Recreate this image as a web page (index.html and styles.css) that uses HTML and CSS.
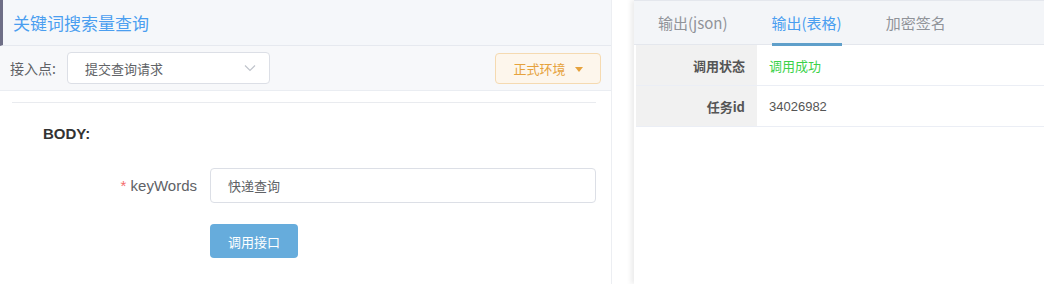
FILE: index.html
```html
<!DOCTYPE html>
<html lang="zh">
<head>
<meta charset="utf-8">
<link rel="stylesheet" href="styles.css">
</head>
<body>
<div class="page">
  <section class="left">
    <div class="head"><span class="title">关键词搜索量查询</span></div>
    <div class="toolbar">
      <div class="entry">
        <span class="entry-label">接入点:</span>
        <div class="select">
          <span>提交查询请求</span>
          <svg class="chev" width="12" height="8" viewBox="0 0 12 8"><path d="M1 1.5 L6 6.5 L11 1.5" fill="none" stroke="#c0c4cc" stroke-width="1.2"/></svg>
        </div>
      </div>
      <div class="env">正式环境<span class="tri"></span></div>
    </div>
    <div class="body">
      <div class="divider"></div>
      <div class="body-title">BODY:</div>
      <div class="form-row">
        <label class="form-label"><span class="star">*</span> keyWords</label>
        <div class="input">快递查询</div>
      </div>
      <div class="form-row btn-row">
        <div class="btn">调用接口</div>
      </div>
    </div>
  </section>
  <div class="gap"></div>
  <section class="right">
    <div class="tabs">
      <div class="tab">输出(json)</div>
      <div class="tab active">输出(表格)</div>
      <div class="tab">加密签名</div>
    </div>
    <div class="table">
      <div class="row"><div class="k">调用状态</div><div class="v ok">调用成功</div></div>
      <div class="row"><div class="k">任务id</div><div class="v">34026982</div></div>
    </div>
  </section>
</div>
</body>
</html>
```
FILE: styles.css
```css
* { box-sizing: border-box; }
html, body { margin: 0; padding: 0; }
body {
  width: 1044px; height: 284px; overflow: hidden; background: #fff;
  font-family: "Liberation Sans", "Noto Sans CJK SC", sans-serif;
}
.page { display: flex; height: 284px; }
.left { width: 612px; border-right: 1px solid #eceef2; display: flex; flex-direction: column; }
.head {
  height: 46px; background: #f5f7fa; border-left: 3px solid #6e6e86;
  border-bottom: 1px solid #e6e9ef; display: flex; align-items: center; padding-left: 10px;
}
.title { font-size: 17px; color: #4a9ef0; font-family: "Noto Sans CJK SC", sans-serif; }
.toolbar {
  height: 45px; background: #f7f8fa; border-bottom: 1px solid #eaedf2;
  display: flex; align-items: center; justify-content: space-between; padding: 0 10px 0 10px;
}
.entry { display: flex; align-items: center; }
.entry-label { font-size: 14px; color: #606266; font-family: "Noto Sans CJK SC", sans-serif; }
.select {
  margin-left: 11px; width: 203px; height: 32px; background: #fff; border: 1px solid #dcdfe6;
  border-radius: 4px; display: flex; align-items: center; justify-content: space-between;
  padding: 0 13px 0 17px; font-size: 13px; color: #606266; font-family: "Noto Sans CJK SC", sans-serif;
}
.env {
  width: 106px; height: 31px; background: #fdf6ec; border: 1px solid #f5dab1; border-radius: 4px;
  color: #e6a23c; font-size: 13px; display: flex; align-items: center; justify-content: center;
  font-family: "Noto Sans CJK SC", sans-serif;
}
.tri {
  width: 0; height: 0; border-left: 4px solid transparent; border-right: 4px solid transparent;
  border-top: 5px solid #e6a23c; margin-left: 9px; margin-top: 2px;
}
.body { padding: 0 15px 0 12px; }
.divider { margin-top: 11px; height: 1px; background: #e9ebef; }
.body-title { margin: 23px 0 0 31px; font-size: 15px; font-weight: bold; color: #333; line-height: 16px; }
.form-row { display: flex; align-items: center; }
.body-title + .form-row { margin-top: 26px; }
.form-label {
  width: 198px; text-align: right; padding-right: 13px; font-size: 15px; color: #606266;
}
.star { color: #f56c6c; }
.input {
  flex: 1; height: 35px; border: 1px solid #dcdfe6; border-radius: 4px; padding-left: 17px;
  display: flex; align-items: center; font-size: 13px; color: #606266; font-family: "Noto Sans CJK SC", sans-serif;
}
.btn-row { margin-top: 21px; padding-left: 198px; }
.btn {
  width: 88px; height: 34px; background: #66acdc; border-radius: 4px; color: #fff; font-size: 13px;
  display: flex; align-items: center; justify-content: center; font-family: "Noto Sans CJK SC", sans-serif;
}
.gap { width: 22px; }
.right {
  flex: 1; border-top: 1px solid #e4e7ed; box-shadow: -3px 0 5px rgba(0,0,0,0.08);
  display: flex; flex-direction: column;
}
.tabs {
  height: 44px; background: #f3f5f8; border-bottom: 1px solid #e4e7ed; display: flex; align-items: stretch;
  padding-left: 24px; gap: 44px;
}
.tab {
  font-size: 15px; color: #909399; display: flex; align-items: center;
  border-bottom: 3px solid transparent; margin-bottom: -2px; font-family: "Noto Sans CJK SC", sans-serif;
}
.tab.active { color: #4a9ef0; border-bottom-color: #5f9fca; }
.table { padding-left: 2px; }
.row { display: flex; height: 41px; border-bottom: 1px solid #ebeef5; }
.k {
  width: 121px; background: #f1f1f1; padding-right: 12px; font-size: 13px;
  font-weight: bold; color: #555; display: flex; align-items: center; justify-content: flex-end;
  font-family: "Noto Sans CJK SC", sans-serif;
}
.v {
  padding-left: 12px; font-size: 13px; color: #555; display: flex; align-items: center;
  font-family: "Liberation Sans", "Noto Sans CJK SC", sans-serif;
}
.v.ok { color: #3cd24a; font-family: "Noto Sans CJK SC", sans-serif; }
```
